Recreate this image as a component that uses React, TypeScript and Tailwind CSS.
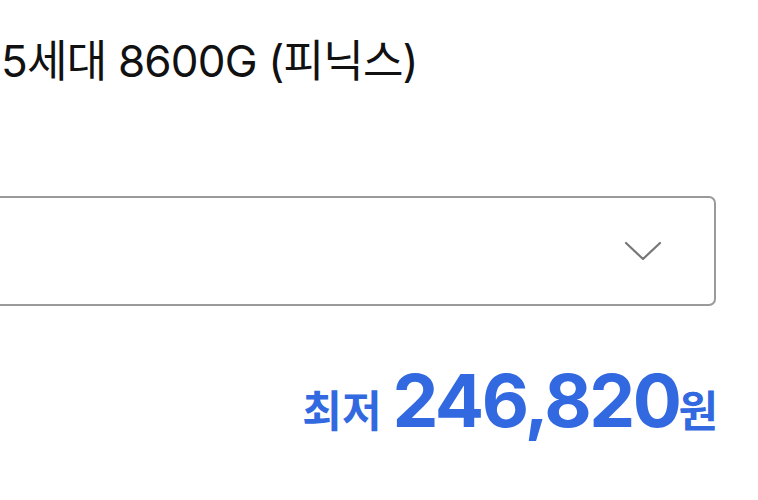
export default function App() {
  const font = { fontFamily: '"Inter", "Noto Sans CJK KR", sans-serif' };
  return (
    <div className="w-[758px] h-[500px] bg-white overflow-hidden" style={font}>
      <div className="pt-[30px] pl-[1px] text-[44px] leading-[62px] text-[#111] tracking-[-0.8px] whitespace-nowrap">
        5세대 8600G (피닉스)
      </div>
      <div className="mt-[104px] -ml-[12px] w-[728px] h-[110px] border-2 border-[#9a9a9a] rounded-[7px] flex items-center justify-end pr-[52px]">
        <svg width="38" height="22" viewBox="0 0 38 22" fill="none">
          <path d="M2 3 L19 19 L36 3" stroke="#777" strokeWidth="2.2" strokeLinecap="round" strokeLinejoin="round" />
        </svg>
      </div>
      <div className="mt-[59px] pr-[40px] flex justify-end items-baseline text-[#3268e0] font-bold whitespace-nowrap">
        <span className="text-[43px] mr-[11px]">최저</span>
        <span className="text-[73px] leading-[72px] tracking-[-2.5px]">246,820</span>
        <span className="text-[43px] -ml-[1px]">원</span>
      </div>
    </div>
  );
}
